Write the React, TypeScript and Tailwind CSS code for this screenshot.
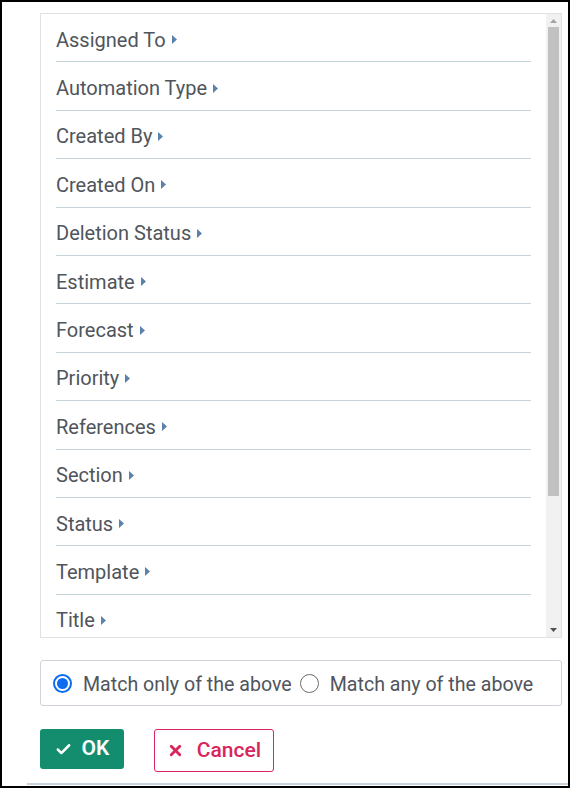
import { Check, X } from 'lucide-react'

const fields = [
  'Assigned To',
  'Automation Type',
  'Created By',
  'Created On',
  'Deletion Status',
  'Estimate',
  'Forecast',
  'Priority',
  'References',
  'Section',
  'Status',
  'Template',
  'Title',
]

function Caret() {
  return (
    <svg width="5" height="9" viewBox="0 0 5 9" className="ml-[6px] shrink-0">
      <path d="M0 0 L5 4.5 L0 9 Z" fill="#5b82ad" />
    </svg>
  )
}

function Scrollbar() {
  return (
    <div className="w-[15px] shrink-0 bg-[#f1f1f1] flex flex-col items-center">
      <div className="h-[13px] w-full flex items-center justify-center">
        <svg width="7" height="4" viewBox="0 0 7 4"><path d="M0 4 L3.5 0 L7 4 Z" fill="#a3a3a3" /></svg>
      </div>
      <div className="w-[11px] h-[469px] bg-[#c1c1c1]" />
      <div className="flex-1" />
      <div className="h-[15px] w-full flex items-center justify-center">
        <svg width="7" height="4" viewBox="0 0 7 4"><path d="M0 0 L7 0 L3.5 4 Z" fill="#505050" /></svg>
      </div>
    </div>
  )
}

function Radio({ checked, label }: { checked: boolean; label: string }) {
  return (
    <label className="flex items-center">
      {checked ? (
        <span className="w-[19px] h-[19px] rounded-full border-2 border-[#0b6cf0] flex items-center justify-center">
          <span className="w-[11px] h-[11px] rounded-full bg-[#0b6cf0]" />
        </span>
      ) : (
        <span className="w-[19px] h-[19px] rounded-full border-[1.5px] border-[#6b6b6b] bg-white" />
      )}
      <span className="ml-[11px] pt-[3px]">{label}</span>
    </label>
  )
}

export default function App() {
  return (
    <div
      className="w-[570px] h-[788px] border-2 border-black bg-white flex flex-col text-[#50555c]"
      style={{ fontFamily: 'Roboto, "Noto Sans", sans-serif' }}
    >
      {/* ── Field list ─────────────────────────────────────────────── */}
      <div className="ml-[38px] mt-[11px] w-[522px] h-[625px] border border-[#dfe3e7] flex">
        <div className="flex-1 overflow-hidden pl-[15px] pr-[15px]">
          {fields.map(f => (
            <div key={f} className="h-[48.4px] pt-[4px] border-b border-[#c5d3dd] flex items-center text-[20px] leading-none">
              <span>{f}</span>
              <Caret />
            </div>
          ))}
        </div>
        <Scrollbar />
      </div>

      {/* ── Match mode ─────────────────────────────────────────────── */}
      <div className="ml-[38px] mt-[22px] w-[522px] h-[46px] border border-[#ced4da] rounded-[3px] flex items-center pl-[12px] pt-[1px] gap-[8px] text-[19.6px] leading-none">
        <Radio checked label="Match only of the above" />
        <Radio checked={false} label="Match any of the above" />
      </div>

      {/* ── Actions ────────────────────────────────────────────────── */}
      <div className="ml-[38px] mt-[23px] flex items-start gap-[30px]">
        <button className="w-[84px] h-[40px] bg-[#138d6e] rounded-[3px] text-white flex items-center justify-center gap-[10px] text-[21px] font-semibold">
          <Check size={17} strokeWidth={3.5} />
          <span>OK</span>
        </button>
        <button className="w-[120px] h-[43px] border border-[#d8265d] rounded-[3px] text-[#d8265d] flex items-center justify-center gap-[13px] text-[21px] font-medium">
          <X size={17} strokeWidth={4} />
          <span>Cancel</span>
        </button>
      </div>

      <div className="mt-auto mb-[1px] ml-[25px] h-[2px] bg-[#c8d3dc]" />
    </div>
  )
}
